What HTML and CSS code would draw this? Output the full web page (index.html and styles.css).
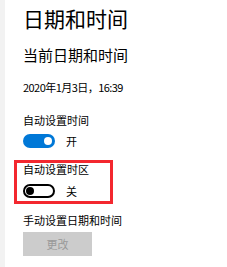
FILE: index.html
```html
<!DOCTYPE html>
<html lang="zh-CN">
<head>
<meta charset="utf-8">
<link rel="stylesheet" href="styles.css">
</head>
<body>
<div class="page">
  <div class="strip"></div>
  <div class="content">
    <h1 class="title">日期和时间</h1>
    <h2 class="subtitle">当前日期和时间</h2>
    <div class="date">2020年1月3日，16:39</div>
    <div class="label label-first">自动设置时间</div>
    <div class="toggle-row">
      <span class="toggle toggle-on"><span class="knob"></span></span>
      <span class="state">开</span>
    </div>
    <div class="highlight">
      <div class="label">自动设置时区</div>
      <div class="toggle-row toggle-row-in">
        <span class="toggle toggle-off"><span class="knob"></span></span>
        <span class="state">关</span>
      </div>
    </div>
    <div class="label label-manual">手动设置日期和时间</div>
    <button class="btn" disabled>更改</button>
  </div>
</div>
</body>
</html>
```

FILE: styles.css
```css
html, body {
  margin: 0;
  padding: 0;
  background: #fff;
}
body {
  font-family: "Noto Sans CJK SC", "Noto Sans", sans-serif;
  color: #000;
  width: 227px;
  height: 267px;
  overflow: hidden;
}
.page {
  display: flex;
  height: 267px;
}
.strip {
  width: 5px;
  flex: none;
  background: #f2f2f2;
}
.content {
  padding-left: 18px;
  padding-top: 8px;
  display: flex;
  flex-direction: column;
  align-items: flex-start;
}
.title {
  margin: 0;
  font-size: 21px;
  line-height: 21px;
  font-weight: normal;
}
.subtitle {
  margin: 18px 0 0;
  font-size: 15px;
  line-height: 15px;
  font-weight: normal;
}
.date {
  margin-top: 20px;
  font-size: 11px;
  line-height: 11px;
  letter-spacing: -0.55px;
}
.label {
  font-size: 11px;
  line-height: 11px;
}
.label-first {
  margin-top: 22px;
}
.toggle-row {
  margin-top: 8px;
  display: flex;
  align-items: center;
  height: 14px;
}
.toggle-row-in {
  margin-top: 9px;
}
.toggle {
  box-sizing: border-box;
  width: 32px;
  height: 14px;
  border-radius: 7px;
  display: flex;
  align-items: center;
  padding: 0 3px;
}
.toggle-on {
  background: #0078d7;
  justify-content: flex-end;
}
.toggle-off {
  border: 2px solid #000;
  padding: 0 1px;
  justify-content: flex-start;
}
.knob {
  width: 8px;
  height: 8px;
  border-radius: 50%;
  background: #fff;
}
.toggle-off .knob {
  background: #000;
}
.state {
  margin-left: 11px;
  font-size: 11px;
  line-height: 11px;
}
.highlight {
  margin: 12px 0 0 -9px;
  box-sizing: border-box;
  width: 99px;
  height: 44px;
  border: 3px solid #f3282f;
  padding: 1px 0 0 6px;
}
.label-manual {
  margin-top: 11px;
}
.btn {
  margin-top: 6px;
  width: 69px;
  height: 24px;
  border: none;
  background: #cccccc;
  color: #999999;
  font-family: inherit;
  font-size: 11px;
  padding: 0;
}
```
